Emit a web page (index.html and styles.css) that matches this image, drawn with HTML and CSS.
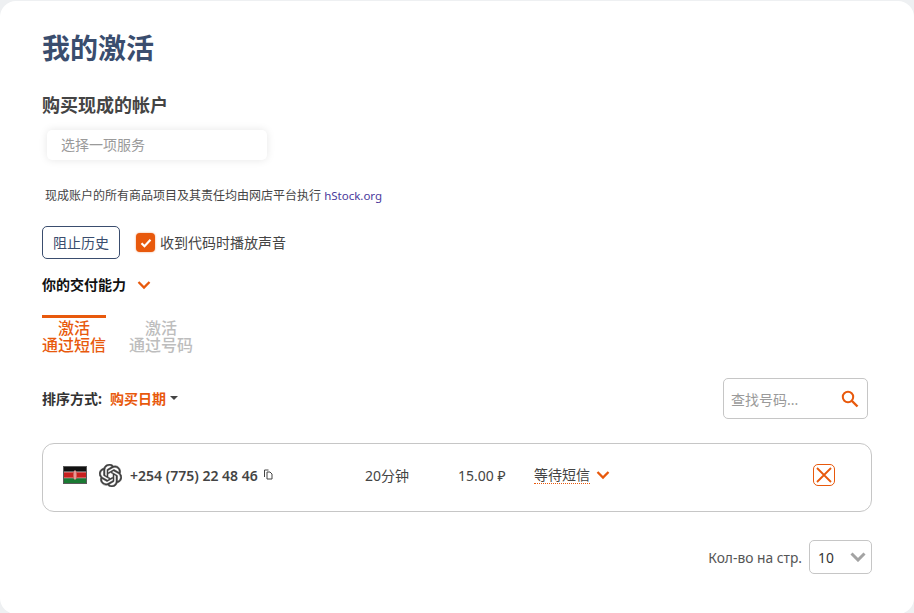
FILE: index.html
```html
<!DOCTYPE html>
<html lang="zh">
<head>
<meta charset="utf-8">
<title>我的激活</title>
<link rel="stylesheet" href="styles.css">
</head>
<body>
<main class="card">
  <h1 class="title">我的激活</h1>
  <h2 class="subtitle">购买现成的帐户</h2>
  <div class="service-select">选择一项服务</div>
  <p class="note">现成账户的所有商品项目及其责任均由网店平台执行 <a class="note-link">hStock.org</a></p>
  <div class="actions">
    <button class="btn-outline">阻止历史</button>
    <label class="check">
      <span class="check-box"><svg width="14" height="14" viewBox="0 0 14 14"><path d="M2.500 7.200l3 3L11.500 3.800" fill="none" stroke="#fff" stroke-width="2.200"/></svg></span>
      收到代码时播放声音
    </label>
  </div>
  <div class="ability">你的交付能力
    <svg class="chev" width="14" height="10" viewBox="0 0 14 10"><path d="M1.500 2l5.500 5.500L12.500 2" fill="none" stroke="#e8590c" stroke-width="2.300"/></svg>
  </div>
  <div class="tabs">
    <div class="tab active">激活<br>通过短信</div>
    <div class="tab">激活<br>通过号码</div>
  </div>
  <div class="toolbar">
    <div class="sort">排序方式:<span class="sort-value">购买日期</span><span class="caret"></span></div>
    <div class="search">
      <span class="search-ph">查找号码...</span>
      <svg width="18" height="18" viewBox="0 0 18 18"><circle cx="7" cy="7" r="5.200" fill="none" stroke="#e8590c" stroke-width="2"/><path d="M11 11l5.500 5.500" stroke="#e8590c" stroke-width="2.400"/></svg>
    </div>
  </div>
  <div class="row">
    <div class="phone-cell">
      <svg class="flag" width="24" height="18" viewBox="0 0 24 18">
        <rect width="24" height="18" fill="#5a5a5a"/>
        <rect x="1" y="1" width="22" height="5" fill="#111"/>
        <rect x="1" y="6" width="22" height="6" fill="#c8201f"/>
        <rect x="1" y="5.600" width="22" height="0.700" fill="#eee"/>
        <rect x="1" y="11.700" width="22" height="0.700" fill="#eee"/>
        <rect x="1" y="12.400" width="22" height="4.600" fill="#1a7a33"/>
        <ellipse cx="12" cy="9" rx="2" ry="4.500" fill="#d9635f"/>
        <path d="M12 4.500v9" stroke="#fff" stroke-width="0.700"/>
      </svg>
      <svg class="gpt" width="23" height="23" viewBox="0 0 24 24"><path fill="#3f3f3f" stroke="#3f3f3f" stroke-width="0.500" d="M22.282 9.821a5.985 5.985 0 0 0-.516-4.91 6.046 6.046 0 0 0-6.51-2.9A6.065 6.065 0 0 0 4.981 4.18a5.985 5.985 0 0 0-3.998 2.9 6.046 6.046 0 0 0 .743 7.097 5.98 5.98 0 0 0 .51 4.911 6.051 6.051 0 0 0 6.515 2.9A5.985 5.985 0 0 0 13.26 24a6.056 6.056 0 0 0 5.772-4.206 5.99 5.99 0 0 0 3.997-2.9 6.056 6.056 0 0 0-.747-7.073zM13.26 22.43a4.476 4.476 0 0 1-2.876-1.04l.141-.081 4.779-2.758a.795.795 0 0 0 .392-.681v-6.737l2.02 1.168a.071.071 0 0 1 .038.052v5.583a4.504 4.504 0 0 1-4.494 4.494zM3.600 18.304a4.470 4.470 0 0 1-.535-3.014l.142.085 4.783 2.759a.771.771 0 0 0 .78 0l5.843-3.369v2.332a.08.08 0 0 1-.033.062L9.740 19.950a4.500 4.500 0 0 1-6.140-1.646zM2.340 7.896a4.485 4.485 0 0 1 2.366-1.973V11.600a.766.766 0 0 0 .388.676l5.815 3.355-2.020 1.168a.076.076 0 0 1-.071 0l-4.830-2.786A4.504 4.504 0 0 1 2.340 7.872zm16.597 3.855l-5.833-3.387L15.119 7.200a.076.076 0 0 1 .071 0l4.830 2.791a4.494 4.494 0 0 1-.676 8.105v-5.678a.79.79 0 0 0-.407-.667zm2.010-3.023l-.141-.085-4.774-2.782a.776.776 0 0 0-.785 0L9.409 9.230V6.897a.066.066 0 0 1 .028-.061l4.830-2.787a4.500 4.500 0 0 1 6.680 4.660zm-12.640 4.135l-2.020-1.164a.08.08 0 0 1-.038-.057V6.075a4.500 4.500 0 0 1 7.375-3.453l-.142.08L8.704 5.460a.795.795 0 0 0-.393.681zm1.097-2.365l2.602-1.500 2.607 1.500v2.999l-2.597 1.500-2.607-1.500z"/></svg>
      <span class="phone">+254 (775) 22 48 46</span>
      <svg class="copy" width="11" height="11" viewBox="0 0 11 11"><path d="M1.500 8V1h4M4 3h3l2 2v5H4z" fill="none" stroke="#444" stroke-width="1"/></svg>
    </div>
    <div class="time">20分钟</div>
    <div class="price">15.00 ₽</div>
    <div class="status"><span class="status-text">等待短信</span>
      <svg class="chev" width="14" height="10" viewBox="0 0 14 10"><path d="M1.500 2l5.500 5.500L12.500 2" fill="none" stroke="#e8590c" stroke-width="2.300"/></svg>
    </div>
    <button class="cancel"><svg width="18" height="18" viewBox="0 0 18 18"><path d="M2 2l14 14M16 2L2 16" stroke="#e8590c" stroke-width="1.800"/></svg></button>
  </div>
  <div class="pager">
    <span>Кол-во на стр.</span>
    <div class="per-page"><span>10</span>
      <svg width="16" height="10" viewBox="0 0 16 10"><path d="M1.500 1.500L8 8l6.500-6.500" fill="none" stroke="#a3a3a3" stroke-width="3"/></svg>
    </div>
  </div>
</main>
</body>
</html>
```

FILE: styles.css
```css
* { box-sizing: border-box; }
html, body { margin: 0; height: 100%; }
body {
  background: #eef0f2;
  font-family: "Noto Sans", "Noto Sans CJK SC", sans-serif;
  color: #444;
  overflow: hidden;
}
.card {
  background: #fff;
  height: 613px;
  margin-top: 1px;
  border-radius: 16px;
  padding: 29px 42px 0;
}
.title { margin: 0; font-size: 28px; line-height: 36px; font-weight: 700; color: #3a4d6e; }
.subtitle { margin: 27px 0 0; font-size: 18px; line-height: 24px; font-weight: 700; color: #444; }
.service-select {
  margin: 13px 0 0 5px;
  width: 220px;
  height: 30px;
  padding-left: 14px;
  border-radius: 5px;
  background: #fff;
  box-shadow: 0 0 8px rgba(0,0,0,.1);
  color: #9a9a9a;
  font-size: 14px;
  line-height: 30px;
}
.note { margin: 26px 0 0 3px; font-size: 12px; line-height: 20px; color: #444; }
.note-link { color: #4a3a9c; font-size: 11.500px; }
.actions { margin-top: 20px; display: flex; align-items: center; gap: 16px; }
.btn-outline {
  width: 78px; height: 33px; padding: 0 0 1px;
  background: #fff;
  border: 1px solid #3a4d6e;
  border-radius: 5px;
  color: #3a4d6e;
  font: inherit;
  font-size: 14px;
}
.check { display: flex; align-items: center; gap: 5px; font-size: 14px; line-height: 18px; color: #444; }
.check-box {
  width: 19px; height: 19px;
  border-radius: 4px;
  background: #e8590c;
  display: flex; align-items: center; justify-content: center;
  box-shadow: 0 0 2px rgba(232,89,12,.6);
}
.ability { margin-top: 16px; display: flex; align-items: center; gap: 11px; font-size: 14px; line-height: 20px; font-weight: 700; color: #111; }
.tabs { margin-top: 20px; display: flex; gap: 23px; }
.tab {
  width: 64px;
  border-top: 3px solid transparent;
  padding-top: 2px;
  text-align: center;
  font-size: 16px;
  line-height: 17px;
  color: #bdbdbd;
  white-space: nowrap;
  font-weight: 500;
}
.tab.active { color: #e8590c; border-top-color: #e8590c; }
.toolbar { margin-top: 24px; display: flex; justify-content: space-between; align-items: center; margin-right: 4px; }
.sort { font-size: 14px; font-weight: 700; color: #333; display: flex; align-items: center; gap: 8px; padding-bottom: 2px; white-space: pre; }
.sort-value { color: #e8590c; }
.caret { width: 0; height: 0; margin-left: -4px; border: 4px solid transparent; border-top-color: #444; border-bottom: 0; }
.search {
  width: 145px; height: 41px;
  border: 1px solid #c6c6c6;
  border-radius: 5px;
  display: flex; align-items: center; justify-content: space-between;
  padding: 0 8px 0 7px;
}
.search-ph { color: #9a9a9a; font-size: 14px; }
.row {
  margin-top: 24px;
  height: 69px;
  border: 1px solid #c6c6c6;
  border-radius: 12px;
  display: flex; align-items: center;
  padding-bottom: 5px;
}
.phone-cell { display: flex; align-items: center; width: 322px; padding-left: 20px; }
.flag { margin-right: 12px; }
.gpt { margin-right: 8px; }
.phone { font-size: 14px; font-weight: 600; color: #444; }
.copy { margin-left: 5px; margin-bottom: 2px; }
.time, .price, .status { font-size: 14px; color: #444; }
.time { width: 93px; }
.price { width: 76px; }
.status { width: 279px; display: flex; align-items: center; gap: 6px; }
.status-text { border-bottom: 1px dotted #e8590c; line-height: 16px; }
.cancel {
  width: 22px; height: 22px; padding: 0;
  border: 1px solid #e8590c;
  border-radius: 5px;
  background: #fff;
  display: flex; align-items: center; justify-content: center;
}
.pager {
  margin-top: 28px;
  display: flex; justify-content: flex-end; align-items: center; gap: 7px;
  font-size: 13.800px; color: #555;
}
.per-page {
  width: 63px; height: 34px;
  border: 1px solid #c6c6c6;
  border-radius: 5px;
  display: flex; align-items: center; justify-content: space-between;
  padding: 0 5px 0 8px;
  color: #333;
}
```
